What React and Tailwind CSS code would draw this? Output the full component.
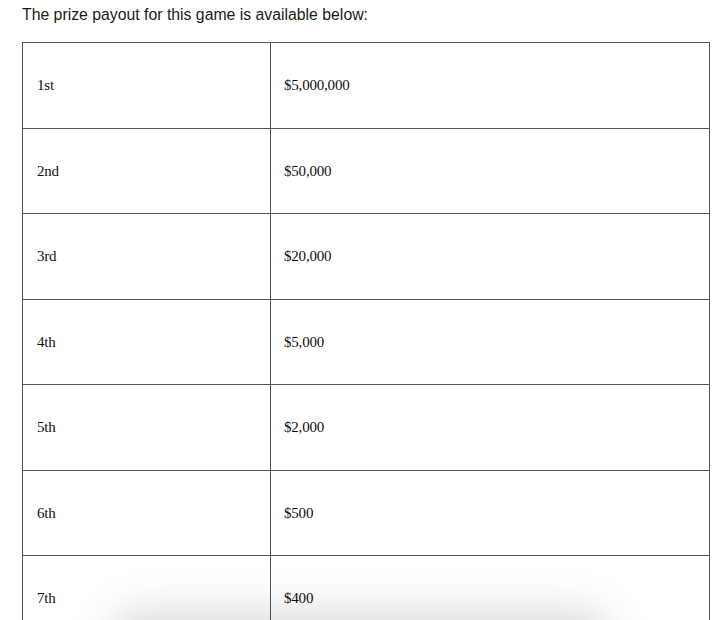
const prizes = [
  ["1st", "$5,000,000"],
  ["2nd", "$50,000"],
  ["3rd", "$20,000"],
  ["4th", "$5,000"],
  ["5th", "$2,000"],
  ["6th", "$500"],
  ["7th", "$400"],
];

export default function App() {
  return (
    <div className="relative h-[620px] w-[720px] overflow-hidden bg-white">
      <p className="pl-[22px] pt-[4px] font-['Liberation_Sans',Arial,sans-serif] text-[15.8px] leading-[22px] text-[#1a1a1a]">
        The prize payout for this game is available below:
      </p>
      <table className="ml-[22px] mt-[16px] w-[688px] table-fixed border-collapse font-['Liberation_Serif','Times_New_Roman',serif] text-[15px] tracking-[-0.2px] text-[#111]">
        <tbody>
          {prizes.map(([place, amount]) => (
            <tr key={place} className="h-[85.5px]">
              <td className="w-[248px] border border-[#555] pl-[14px] align-middle">{place}</td>
              <td className="border border-[#555] pl-[13px] align-middle">{amount}</td>
            </tr>
          ))}
        </tbody>
      </table>
      <div className="pointer-events-none absolute bottom-[-52px] left-[110px] h-[60px] w-[500px] rounded-full bg-black/15 blur-[22px]" />
    </div>
  );
}
